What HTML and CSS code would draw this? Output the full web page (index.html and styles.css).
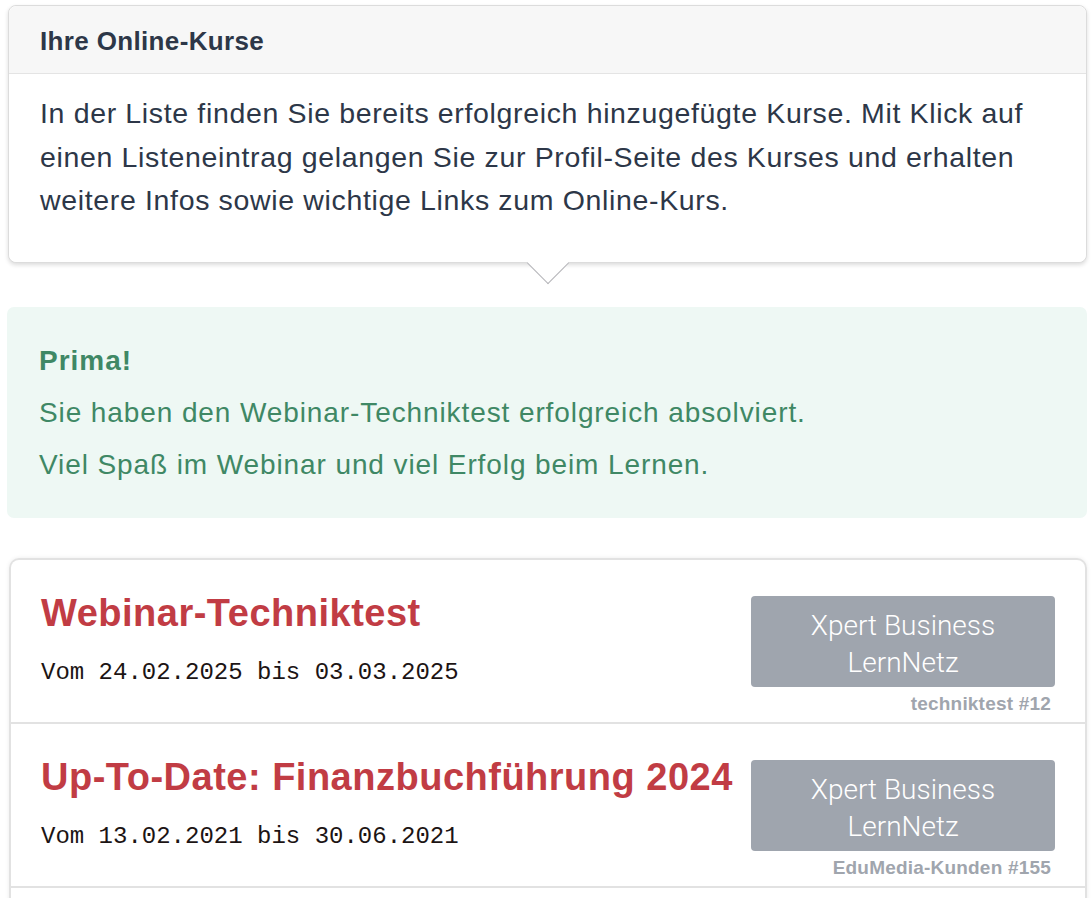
FILE: index.html
```html
<!DOCTYPE html>
<html lang="de">
<head>
    <meta charset="UTF-8">
    <meta name="viewport" content="width=device-width, initial-scale=1.0">
    <title>Ihre Online-Kurse</title>
    <link rel="stylesheet" href="styles.css">
</head>
<body>
    <div class="info-card">
        <div class="info-header">Ihre Online-Kurse</div>
        <div class="info-body">
            In der Liste finden Sie bereits erfolgreich hinzugefügte Kurse. Mit Klick auf<br>
            einen Listeneintrag gelangen Sie zur Profil-Seite des Kurses und erhalten<br>
            weitere Infos sowie wichtige Links zum Online-Kurs.
        </div>
    </div>

    <div class="alert-success">
        <p class="alert-title">Prima!</p>
        <p>Sie haben den Webinar-Techniktest erfolgreich absolviert.</p>
        <p>Viel Spaß im Webinar und viel Erfolg beim Lernen.</p>
    </div>

    <div class="course-list">
        <a class="course-row" href="#">
            <div class="course-info">
                <div class="course-title">Webinar-Techniktest</div>
                <div class="course-date">Vom 24.02.2025 bis 03.03.2025</div>
            </div>
            <div class="course-side">
                <div class="provider-btn">Xpert Business<br>LernNetz</div>
                <div class="course-tag">techniktest #12</div>
            </div>
        </a>
        <a class="course-row" href="#">
            <div class="course-info">
                <div class="course-title">Up-To-Date: Finanzbuchführung 2024</div>
                <div class="course-date">Vom 13.02.2021 bis 30.06.2021</div>
            </div>
            <div class="course-side">
                <div class="provider-btn">Xpert Business<br>LernNetz</div>
                <div class="course-tag">EduMedia-Kunden #155</div>
            </div>
        </a>
    </div>
</body>
</html>
```

FILE: styles.css
```css
html, body {
    background: #ffffff;
    margin: 0;
    padding: 0;
    font-family: "Liberation Sans", Arial, sans-serif;
    color: #2d3748;
}

body {
    padding: 5px 5px 0 8px;
    overflow: hidden;
}

.info-card {
    position: relative;
    border: 1px solid #dcdcdc;
    border-radius: 8px;
    background: #ffffff;
    box-shadow: 0 2px 4px rgba(0, 0, 0, 0.14);
}

.info-card::after {
    content: '';
    position: absolute;
    left: 50%;
    bottom: -16px;
    width: 29px;
    height: 29px;
    margin-left: -15px;
    background: #ffffff;
    border-right: 1px solid #b4b4b8;
    border-bottom: 1px solid #b4b4b8;
    transform: rotate(45deg);
}

.info-header {
    height: 67px;
    line-height: 70px;
    padding: 0 31px;
    background: #f7f7f7;
    border-bottom: 1px solid #e4e4e4;
    border-radius: 8px 8px 0 0;
    font-size: 26px;
    font-weight: bold;
    letter-spacing: 0.35px;
}

.info-body {
    position: relative;
    z-index: 1;
    padding: 18px 31px 39px;
    font-size: 28.5px;
    letter-spacing: 0.65px;
    line-height: 43.5px;
    white-space: nowrap;
    border-radius: 0 0 8px 8px;
    background: #ffffff;
}

.alert-success {
    margin: 44px 0 0 -1px;
    padding: 34px 32px 34px;
    background: #eef8f4;
    border-radius: 7px;
    color: #3f8865;
    font-size: 28px;
    letter-spacing: 0.9px;
    line-height: 39px;
}

.alert-success p {
    margin: 13px 0 0;
}

.alert-success .alert-title {
    margin: 0;
    font-weight: bold;
    letter-spacing: 1px;
}

.course-list {
    margin: 40px 0 0 1px;
    padding-bottom: 40px;
    border: 2px solid #e2e2e2;
    border-bottom: none;
    border-radius: 10px 10px 0 0;
    box-shadow: 0 0 4px rgba(0, 0, 0, 0.08);
}

.course-row {
    display: flex;
    justify-content: space-between;
    padding: 36px 30px 8px 30px;
    border-bottom: 2px solid #e2e2e2;
    text-decoration: none;
}

.course-title {
    color: #c13c44;
    font-size: 38px;
    font-weight: bold;
    letter-spacing: 0.5px;
    line-height: 32px;
    margin-top: 1px;
}

.course-date {
    margin-top: 29px;
    font-family: "Liberation Mono", "Courier New", monospace;
    font-size: 24px;
    line-height: 30px;
    color: #1c1414;
}

.course-side {
    display: flex;
    flex-direction: column;
    align-items: flex-end;
}

.provider-btn {
    width: 304px;
    height: 91px;
    box-sizing: border-box;
    padding-top: 11px;
    background: #9fa5ae;
    border-radius: 4px;
    color: #ffffff;
    font-family: Roboto, "Liberation Sans", sans-serif;
    font-weight: 300;
    font-size: 28px;
    line-height: 37px;
    text-align: center;
}

.course-tag {
    margin-top: 7px;
    margin-right: 4px;
    color: #a0a5ad;
    font-size: 19px;
    font-weight: bold;
    letter-spacing: 0.2px;
    line-height: 20px;
}
```
